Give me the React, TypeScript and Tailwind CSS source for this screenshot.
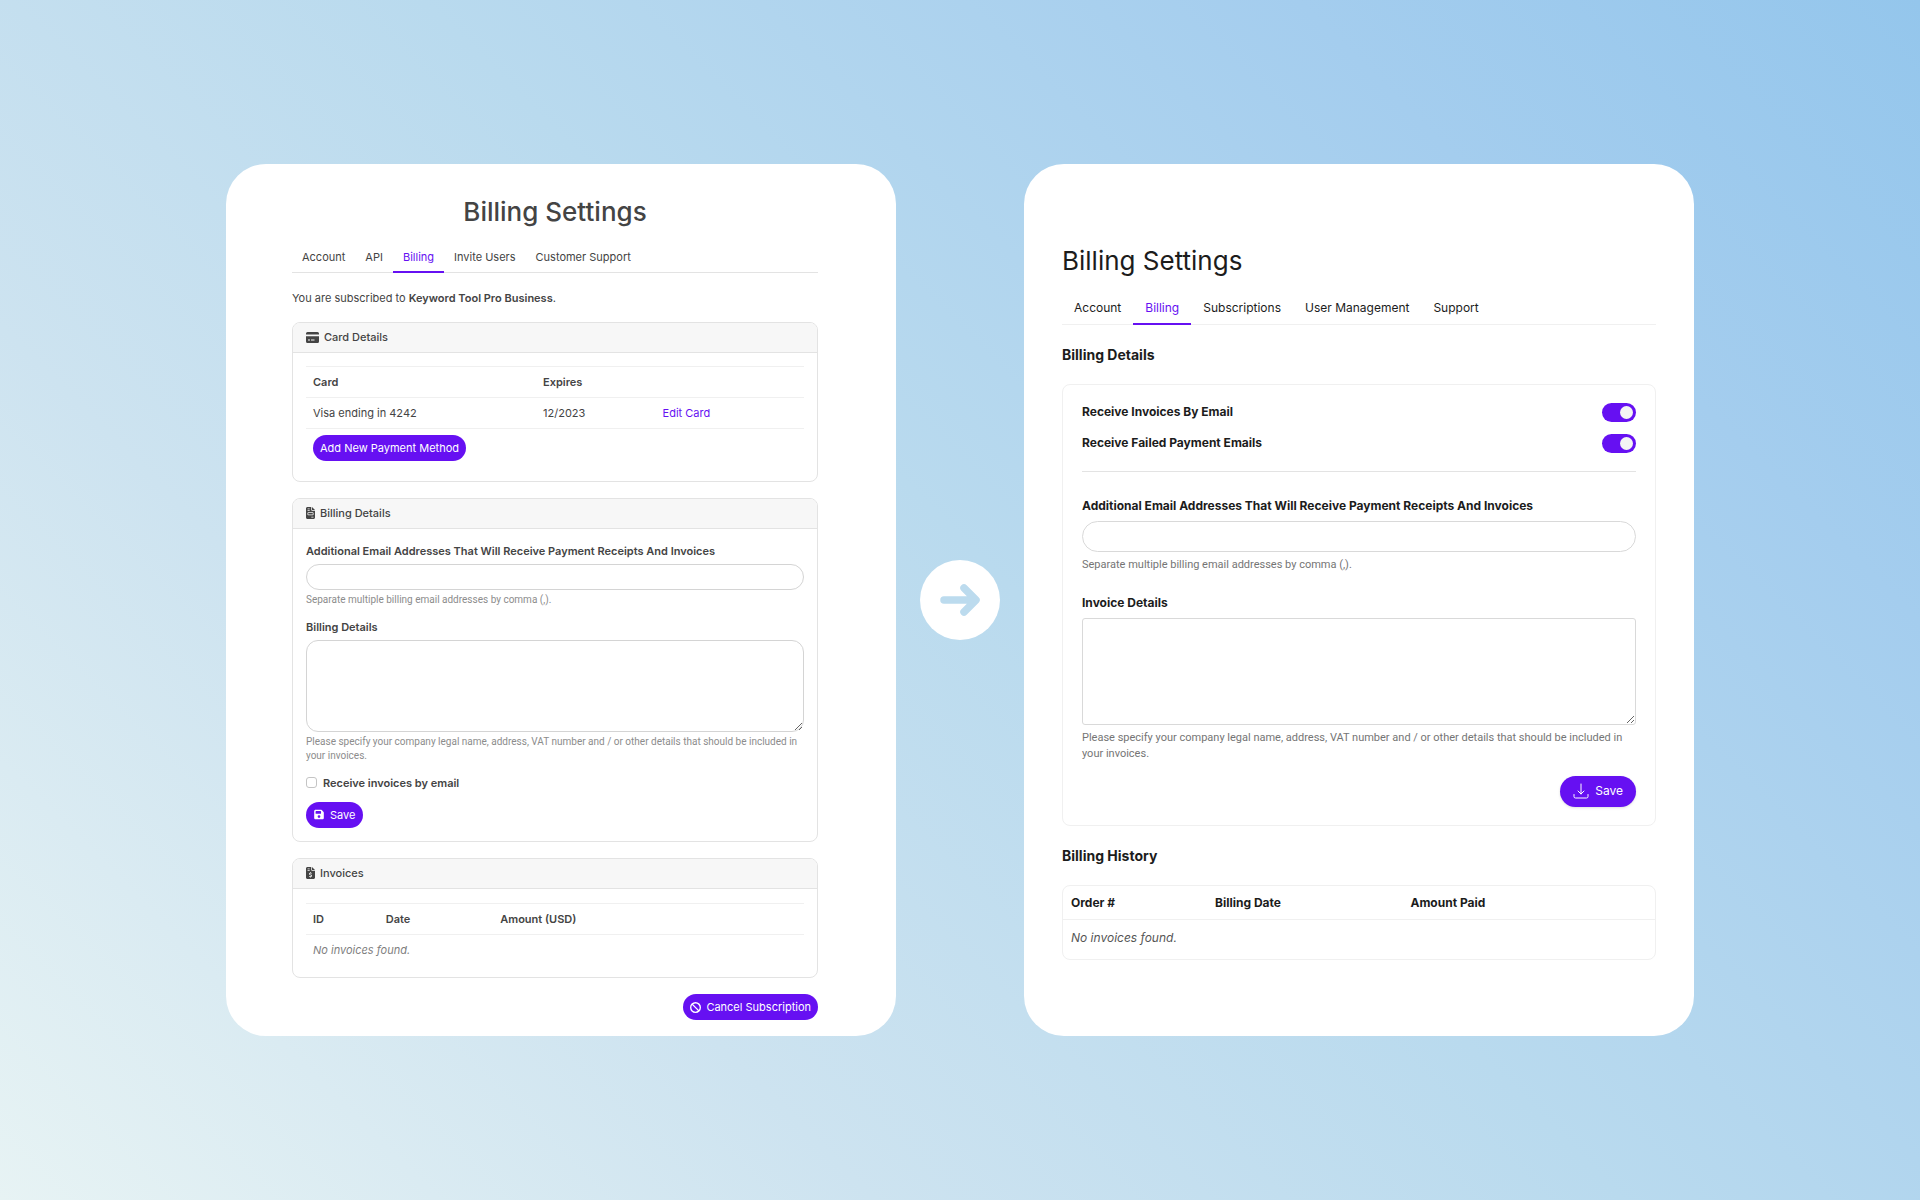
import { useState } from "react";
import type { ReactNode } from "react";
import { FaBan, FaFileInvoice, FaFileInvoiceDollar, FaFloppyDisk } from "react-icons/fa6";

/**
 * BillingRedesign
 * ---------------
 * Before / after comparison of the billing settings page:
 * legacy layout on the left, redesigned layout on the right.
 */

const LEGACY_TABS = ["Account", "API", "Billing", "Invite Users", "Customer Support"];
const NEW_TABS = ["Account", "Billing", "Subscriptions", "User Management", "Support"];

const EMAILS_HINT = "Separate multiple billing email addresses by comma (,).";
const DETAILS_HINT =
    "Please specify your company legal name, address, VAT number and / or other details that should be included in your invoices.";

function CardIcon() {
    return (
        <svg viewBox="0 0 13 11" className="w-[13px] h-[11px] fill-current" aria-hidden="true">
            <path d="M1.500 0h10A1.500 1.500 0 0 1 13 1.500V2.600H0V1.500A1.500 1.500 0 0 1 1.500 0z" />
            <path fillRule="evenodd" d="M0 4.200h13v5.300a1.500 1.500 0 0 1-1.500 1.500h-10A1.500 1.500 0 0 1 0 9.500zM2 7.400v1h2v-1zM5 7.400v1h3.500v-1z" />
        </svg>
    );
}

/** Grey-headed box used all over the legacy page */
function Panel({ icon, title, children }: { icon: ReactNode; title: string; children: ReactNode }) {
    return (
        <section className="rounded-lg border border-[#e3e3e3] overflow-hidden">
            <h2 className="flex items-center gap-[5px] h-[30px] px-[13px] bg-[#f7f7f7] border-b border-[#e3e3e3] font-medium">
                {icon}
                {title}
            </h2>
            {children}
        </section>
    );
}

function LegacyBilling() {
    return (
        <article className="rounded-[40px] bg-white pl-[66px] pr-[78px] pt-7 pb-4 text-[11px] leading-4 text-[#444]">
            <h1 className="text-center text-[26px] leading-10 font-medium">Billing Settings</h1>

            <nav className="mt-[11px] flex border-b border-[#e3e3e3]">
                {LEGACY_TABS.map((tab) => (
                    <a
                        key={tab}
                        href="#"
                        className={
                            tab === "Billing"
                                ? "-mb-px px-[10px] pt-[6px] pb-[6px] border-b-2 border-[#6610f2] text-[#6610f2]"
                                : "-mb-px px-[10px] pt-[6px] pb-2"
                        }
                    >
                        {tab}
                    </a>
                ))}
            </nav>

            <p className="mt-[17px] mb-4">
                You are subscribed to <strong className="font-semibold">Keyword Tool Pro Business</strong>.
            </p>

            <div className="flex flex-col gap-4">
                {/* ---------- CARD DETAILS ---------- */}
                <Panel icon={<CardIcon />} title="Card Details">
                    <div className="px-[13px] pt-[13px] pb-5">
                        <table className="w-full table-fixed text-left">
                            <colgroup>
                                <col className="w-[46%]" />
                                <col className="w-[24%]" />
                                <col />
                            </colgroup>
                            <thead>
                                <tr className="h-[31px] border-y border-[#f0f0f0]">
                                    <th className="px-[7px] font-semibold">Card</th>
                                    <th className="px-2 font-semibold">Expires</th>
                                    <th />
                                </tr>
                            </thead>
                            <tbody>
                                <tr className="h-[31px] border-b border-[#f0f0f0]">
                                    <td className="px-[7px]">Visa ending in 4242</td>
                                    <td className="px-2">12/2023</td>
                                    <td className="px-2">
                                        <a href="#" className="text-[#6610f2]">Edit Card</a>
                                    </td>
                                </tr>
                            </tbody>
                        </table>
                        <button type="button" className="mt-[6px] ml-[7px] h-[26px] px-[7px] rounded-full bg-[#6610f2] text-white">
                            Add New Payment Method
                        </button>
                    </div>
                </Panel>

                {/* ---------- BILLING DETAILS ---------- */}
                <Panel icon={<FaFileInvoice className="w-[9px] h-3" />} title="Billing Details">
                    <div className="px-[13px] pt-[14px] pb-[13px]">
                        <label htmlFor="legacy-emails" className="block font-semibold">
                            Additional Email Addresses That Will Receive Payment Receipts And Invoices
                        </label>
                        <input id="legacy-emails" type="text" className="mt-[5px] block w-full h-[26px] px-3 rounded-full border border-[#d4d4d4] outline-none" />
                        <p className="mt-[3px] font-['Roboto',sans-serif] text-[10px] leading-[14px] text-[#8c8c8c]">{EMAILS_HINT}</p>

                        <label htmlFor="legacy-details" className="mt-3 block font-semibold">Billing Details</label>
                        <textarea id="legacy-details" className="mt-[5px] block w-full h-[92px] px-3 py-2 rounded-xl border border-[#d4d4d4] outline-none" />
                        <p className="mt-[3px] font-['Roboto',sans-serif] text-[10px] leading-[14px] text-[#8c8c8c]">{DETAILS_HINT}</p>

                        <label className="mt-3 flex items-center gap-[6px] font-semibold">
                            <input type="checkbox" className="appearance-none w-[11px] h-[11px] rounded-[3px] border border-[#c4c4c4]" />
                            Receive invoices by email
                        </label>
                        <button type="button" className="mt-[11px] flex items-center gap-[6px] h-[26px] px-2 rounded-full bg-[#6610f2] text-white">
                            <FaFloppyDisk className="w-[10px] h-[11px]" />
                            Save
                        </button>
                    </div>
                </Panel>

                {/* ---------- INVOICES ---------- */}
                <Panel icon={<FaFileInvoiceDollar className="w-[9px] h-3" />} title="Invoices">
                    <div className="px-[13px] pt-[14px] pb-3">
                        <table className="w-full table-fixed text-left">
                            <colgroup>
                                <col className="w-[15%]" />
                                <col className="w-[23%]" />
                                <col />
                            </colgroup>
                            <thead>
                                <tr className="h-[31px] border-y border-[#f0f0f0]">
                                    <th className="px-[7px] font-semibold">ID</th>
                                    <th className="px-[5px] font-semibold">Date</th>
                                    <th className="px-[5px] font-semibold">Amount (USD)</th>
                                </tr>
                            </thead>
                            <tbody>
                                <tr className="h-[31px]">
                                    <td colSpan={3} className="px-[7px] italic text-[#808080]">No invoices found.</td>
                                </tr>
                            </tbody>
                        </table>
                    </div>
                </Panel>

                <button type="button" className="self-end flex items-center gap-[5px] h-[26px] px-[7px] rounded-full bg-[#6610f2] text-white">
                    <FaBan className="w-[11px] h-[11px]" />
                    Cancel Subscription
                </button>
            </div>
        </article>
    );
}

function Toggle({ label }: { label: string }) {
    const [on, setOn] = useState(true);

    return (
        <label className="flex items-center justify-between cursor-pointer font-bold">
            {label}
            <span className="relative flex">
                <input
                    type="checkbox"
                    role="switch"
                    checked={on}
                    onChange={() => setOn(!on)}
                    className="peer appearance-none w-[34px] h-[19px] rounded-full bg-neutral-300 checked:bg-[#6610f2] cursor-pointer"
                />
                <span className="pointer-events-none absolute top-[3px] left-[3px] w-[13px] h-[13px] rounded-full bg-[#f4f4f4] transition-transform peer-checked:translate-x-[15px]" />
            </span>
        </label>
    );
}

function NewBilling() {
    return (
        <article className="rounded-[40px] bg-white px-[38px] pt-[77px] pb-[70px] text-[12px] leading-4 text-[#1c1c1c]">
            <h1 className="text-[26px] leading-10">Billing Settings</h1>

            <nav className="mt-[13px] flex border-b border-[#f0f0f0]">
                {NEW_TABS.map((tab) => (
                    <a
                        key={tab}
                        href="#"
                        className={
                            tab === "Billing"
                                ? "-mb-px px-[12px] pt-[6px] pb-[7px] border-b-2 border-[#6610f2] text-[#6610f2]"
                                : "-mb-px px-[12px] pt-[6px] pb-[9px]"
                        }
                    >
                        {tab}
                    </a>
                ))}
            </nav>

            <h2 className="mt-5 mb-[19px] text-[14px] leading-5 font-bold">Billing Details</h2>

            <section className="rounded-lg border border-[#f0f0f0] px-[19px] pt-[18px] pb-[18px]">
                <div className="flex flex-col gap-3">
                    <Toggle label="Receive Invoices By Email" />
                    <Toggle label="Receive Failed Payment Emails" />
                </div>
                <hr className="mt-[18px] mb-[26px] border-[#e3e3e3]" />

                <label htmlFor="emails" className="block font-bold">
                    Additional Email Addresses That Will Receive Payment Receipts And Invoices
                </label>
                <input id="emails" type="text" className="mt-[7px] block w-full h-[31px] px-4 rounded-full border border-[#d9d9d9] outline-none" />
                <p className="mt-[5px] font-['Roboto',sans-serif] text-[11px] leading-4 text-[#757575]">{EMAILS_HINT}</p>

                <label htmlFor="details" className="mt-[22px] block font-bold">Invoice Details</label>
                <textarea id="details" className="mt-[7px] block w-full h-[107px] px-3 py-2 rounded-[3px] border border-[#d9d9d9] outline-none" />
                <p className="mt-[5px] font-['Roboto',sans-serif] text-[11px] leading-4 text-[#757575]">{DETAILS_HINT}</p>

                <button type="button" className="mt-[14px] ml-auto flex items-center gap-[6px] h-[31px] px-[13px] rounded-full bg-[#6610f2] text-white shadow-sm">
                    <svg viewBox="0 0 16 16" className="w-4 h-4 fill-none stroke-current" strokeLinecap="round" strokeLinejoin="round">
                        <path d="M8 1v10M5 8l3 3 3-3M1 11.500v2a1.500 1.500 0 0 0 1.500 1.500h11a1.500 1.500 0 0 0 1.500-1.500v-2" />
                    </svg>
                    Save
                </button>
            </section>

            <h2 className="mt-5 mb-[19px] text-[14px] leading-5 font-bold">Billing History</h2>

            <div className="rounded-lg border border-[#f0f0f0]">
                <table className="w-full table-fixed text-left">
                    <colgroup>
                        <col className="w-[24%]" />
                        <col className="w-[33%]" />
                        <col />
                    </colgroup>
                    <thead>
                        <tr className="h-[34px] border-b border-[#f0f0f0]">
                            <th className="px-2 font-bold">Order #</th>
                            <th className="px-[10px] font-bold">Billing Date</th>
                            <th className="px-[10px] font-bold">Amount Paid</th>
                        </tr>
                    </thead>
                    <tbody>
                        <tr className="h-[39px]">
                            <td colSpan={3} className="px-2 pb-1 italic text-[#555]">No invoices found.</td>
                        </tr>
                    </tbody>
                </table>
            </div>
        </article>
    );
}

export default function App() {
    return (
        <main className="min-h-screen flex items-center justify-center px-6 bg-[linear-gradient(45deg,#e7f3f4_0%,#cde3f0_28%,#b9daee_52%,#a4cdee_80%,#94c6ec_100%)] font-['Inter',sans-serif]">
            <div className="grid w-full max-w-[1468px] grid-cols-[1fr_80px_1fr] gap-6">
                <LegacyBilling />
                <div className="self-center flex items-center justify-center w-20 h-20 rounded-full bg-white">
                    <svg viewBox="0 0 40 40" className="w-10 h-10 fill-none stroke-[#bcdbee]" strokeWidth="7.5" strokeLinecap="round" strokeLinejoin="round" aria-hidden="true">
                        <path d="M4 20h31M24 8l12 12-12 12" />
                    </svg>
                </div>
                <NewBilling />
            </div>
        </main>
    );
}
